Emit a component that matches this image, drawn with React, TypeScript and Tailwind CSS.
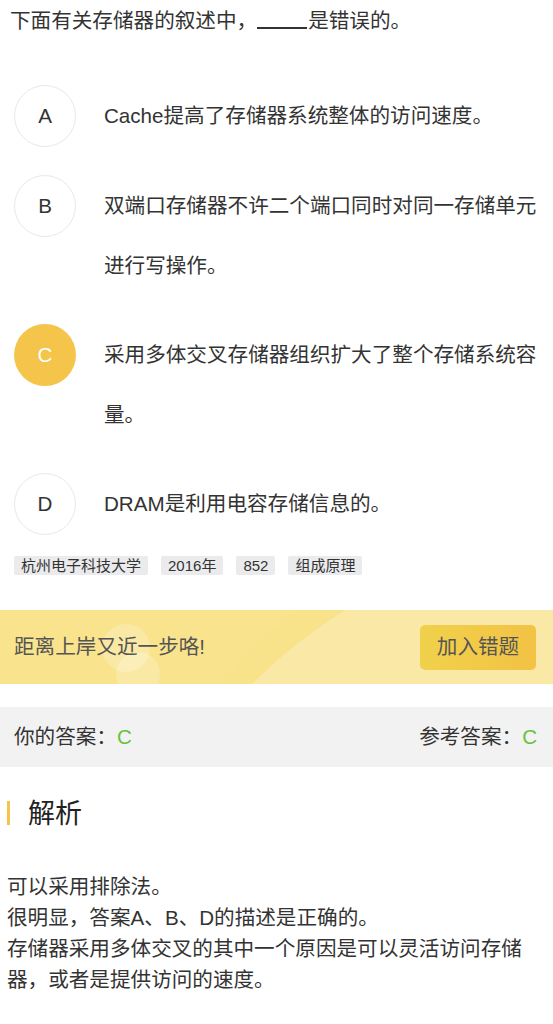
import React from "react"

const font = { fontFamily: '"Liberation Sans", "Noto Sans CJK SC", sans-serif' }

const options = [
  { key: "A", text: "Cache提高了存储器系统整体的访问速度。" },
  { key: "B", text: "双端口存储器不许二个端口同时对同一存储单元进行写操作。" },
  { key: "C", text: "采用多体交叉存储器组织扩大了整个存储系统容量。", selected: true },
  { key: "D", text: "DRAM是利用电容存储信息的。" },
]

const tags = ["杭州电子科技大学", "2016年", "852", "组成原理"]

export default function App() {
  return (
    <div className="w-[553px] min-h-[1024px] bg-white text-[#333]" style={font}>
      {/* 题干 */}
      <div className="px-[10px] pt-[5px] text-[20.6px] leading-[31px]">
        下面有关存储器的叙述中，
        <span className="inline-block w-[50px] h-[24px] border-b-2 border-[#333] align-[-1px] mr-[1px]"></span>
        是错误的。
      </div>

      {/* 选项 */}
      <div className="mt-[49px]">
        {options.map((o) => (
          <div key={o.key} className="flex items-start mb-[28px]">
            <div
              className={
                o.selected
                  ? "ml-[14px] w-[62px] h-[62px] shrink-0 rounded-full bg-[#f4c54a] text-white flex items-center justify-center text-[20.6px]"
                  : "ml-[14px] w-[62px] h-[62px] shrink-0 rounded-full border border-[#e8e8e8] text-[#333] flex items-center justify-center text-[20.6px]"
              }
            >
              {o.key}
            </div>
            <div className="ml-[28px] mt-px pr-[14px] text-[20.6px] leading-[60px]">{o.text}</div>
          </div>
        ))}
      </div>

      {/* 标签 */}
      <div className="flex gap-[13px] pl-[14px] -mt-[7px]">
        {tags.map((t) => (
          <span key={t} className="h-[19px] px-[7px] bg-[#ebebed] rounded-[2px] text-[15px] leading-[19px] text-[#333]">
            {t}
          </span>
        ))}
      </div>

      {/* 提示条 */}
      <div className="relative mt-[35px] h-[74px] bg-[#f9e38c] overflow-hidden flex items-center justify-between pl-[14px] pr-[17px]">
        <svg className="absolute inset-0" width="553" height="74" viewBox="0 0 553 74">
          <path d="M345 0 Q290 35 252 74 L553 74 L553 0 Z" fill="#fae9a6" />
          <path d="M300 0 Q250 35 225 74 L252 74 Q290 35 345 0 Z" fill="#f8e28a" />
          <circle cx="126" cy="38" r="24" fill="#ffffff" fillOpacity="0.22" />
          <circle cx="138" cy="64" r="22" fill="#ffffff" fillOpacity="0.22" />
        </svg>
        <span className="relative text-[20.6px] text-[#555]">距离上岸又近一步咯!</span>
        <button className="relative w-[116px] h-[45px] rounded-[5px] bg-gradient-to-r from-[#f0d14c] to-[#f3c244] text-[20.6px] text-[#555]">
          加入错题
        </button>
      </div>

      {/* 答案 */}
      <div className="mt-[23px] h-[60px] bg-[#f2f2f2] flex items-center justify-between pl-[14px] pr-[16px] text-[20.6px]">
        <span>
          你的答案：<span className="text-[#67c23a]">C</span>
        </span>
        <span>
          参考答案：<span className="text-[#67c23a]">C</span>
        </span>
      </div>

      {/* 解析 */}
      <div className="mt-[34px] flex items-start">
        <div className="ml-[7px] w-[3px] h-[24px] bg-[#f4c54a]"></div>
        <div className="ml-[18px] -mt-[3px] text-[27px] leading-[32px] text-[#222]">解析</div>
      </div>
      <div className="mt-[41px] pl-[7px] pr-[14px] text-[20.6px] leading-[31px]">
        <p>可以采用排除法。</p>
        <p>很明显，答案A、B、D的描述是正确的。</p>
        <p>存储器采用多体交叉的其中一个原因是可以灵活访问存储器，或者是提供访问的速度。</p>
      </div>
    </div>
  )
}
